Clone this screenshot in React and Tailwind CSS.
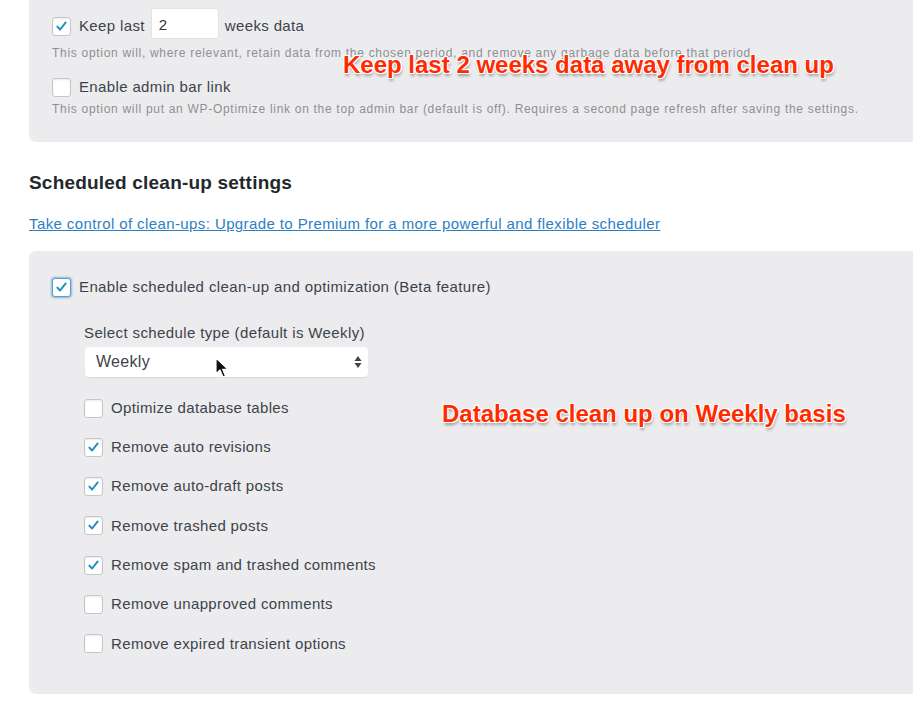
import React from "react";

const font = { fontFamily: '"Liberation Sans", Arial, sans-serif' };

function Box({ checked, focus }) {
  return (
    <span
      className={
        "relative flex h-[19px] w-[19px] shrink-0 items-center justify-center rounded-[3px] bg-white " +
        (focus
          ? "border border-[#5b9dd9] shadow-[0_0_2px_1px_rgba(30,140,190,0.5)]"
          : "border border-[#c3c6ca] shadow-[inset_0_1px_2px_rgba(0,0,0,0.08)]")
      }
    >
      {checked && (
        <svg width="15" height="15" viewBox="0 0 20 20">
          <path
            d="M4.5 10.2 L8.2 14 L15.6 4.6"
            fill="none"
            stroke="#1e8cbe"
            strokeWidth="2.6"
            strokeLinecap="round"
            strokeLinejoin="round"
          />
        </svg>
      )}
    </span>
  );
}

function Row({ checked, label }) {
  return (
    <div className="flex h-[22px] items-center gap-[8px]">
      <Box checked={checked} />
      <span className="text-[15px] text-[#3c434a] tracking-[0.36px]">{label}</span>
    </div>
  );
}

const annoStyle = {
  textShadow:
    "1px 0 0 #fff, -1px 0 0 #fff, 0 1px 0 #fff, 0 -1px 0 #fff, 1px 1px 0 #fff, -1px -1px 0 #fff, 1px -1px 0 #fff, -1px 1px 0 #fff, 1px 3px 3px rgba(0,0,0,0.35)",
};

export default function App() {
  const items = [
    [false, "Optimize database tables"],
    [true, "Remove auto revisions"],
    [true, "Remove auto-draft posts"],
    [true, "Remove trashed posts"],
    [true, "Remove spam and trashed comments"],
    [false, "Remove unapproved comments"],
    [false, "Remove expired transient options"],
  ];
  return (
    <div className="relative h-[708px] w-[913px] overflow-hidden bg-white" style={font}>
      {/* Top panel */}
      <div className="ml-[29px] rounded-bl-[7px] bg-[#ececee] pb-[25px] pl-[23px] pt-[8px]">
        <div className="flex h-[31px] items-center">
          <span className="mt-[6px]"><Box checked /></span>
          <span className="ml-[8px] mt-[5px] text-[15px] text-[#3c434a] tracking-[0.36px]">Keep last</span>
          <div className="ml-[6px] flex h-[31px] w-[68px] items-center rounded-[3px] border border-[#e2e2e4] bg-white pl-[7px] pt-[3px] text-[15px] text-[#333]">
            2
          </div>
          <span className="ml-[6px] mt-[5px] text-[15px] text-[#3c434a] tracking-[0.36px]">weeks data</span>
        </div>
        <p className="mt-[6px] text-[12px] leading-[16px] text-[#8e9095] tracking-[0.7px]">
          This option will, where relevant, retain data from the chosen period, and remove any garbage data before that period.
        </p>
        <div className="mt-[15px]">
          <Row checked={false} label="Enable admin bar link" />
        </div>
        <p className="mt-[3px] text-[12px] leading-[16px] text-[#8e9095] tracking-[0.7px]">
          This option will put an WP-Optimize link on the top admin bar (default is off). Requires a second page refresh after saving the settings.
        </p>
      </div>

      {/* Heading */}
      <h2 className="ml-[29px] mt-[29px] text-[19px] font-semibold leading-[24px] text-[#23282d] tracking-[0.2px]">
        Scheduled clean-up settings
      </h2>
      <a className="ml-[29px] mt-[19px] block text-[15px] leading-[20px] text-[#2b80c5] underline tracking-[0.4px]">
        Take control of clean-ups: Upgrade to Premium for a more powerful and flexible scheduler
      </a>

      {/* Bottom panel */}
      <div className="ml-[29px] mt-[17px] rounded-l-[7px] bg-[#ececee] pb-[39px] pl-[23px] pt-[25px]">
        <div className="flex h-[22px] items-center gap-[8px]">
          <Box checked focus />
          <span className="text-[15px] text-[#3c434a] tracking-[0.38px]">
            Enable scheduled clean-up and optimization (Beta feature)
          </span>
        </div>
        <div className="ml-[32px]">
          <div className="mt-[26px] text-[15px] leading-[18px] text-[#3c434a] tracking-[0.38px]">
            Select schedule type (default is Weekly)
          </div>
          <div className="ml-[1px] mt-[5px] flex h-[30px] w-[283px] items-center justify-between rounded-[4px] bg-white pl-[11px] pr-[6px] text-[16px] text-[#3c434a] tracking-[0.3px] shadow-[0_1px_1px_rgba(0,0,0,0.08)]">
            <span>Weekly</span>
            <svg width="8" height="14" viewBox="0 0 8 14">
              <path d="M4 1 L7.5 6 L0.5 6 Z" fill="#444" />
              <path d="M4 13 L7.5 8 L0.5 8 Z" fill="#444" />
            </svg>
          </div>
          <div className="mt-[20px] flex flex-col gap-[17.33px]">
            {items.map(([c, l]) => (
              <Row key={l} checked={c} label={l} />
            ))}
          </div>
        </div>
      </div>

      {/* Annotations */}
      <div
        className="absolute left-[343px] top-[50px] text-[24px] font-bold leading-[30px] text-[#ff2a00]"
        style={annoStyle}
      >
        Keep last 2 weeks data away from clean up
      </div>
      <div
        className="absolute left-[442px] top-[399px] text-[24px] font-bold leading-[30px] text-[#ff2a00]"
        style={annoStyle}
      >
        Database clean up on Weekly basis
      </div>

      {/* Cursor */}
      <svg className="absolute left-[215px] top-[357px]" width="14" height="22" viewBox="0 0 14 22">
        <path
          d="M1 1 L1 17 L5 13 L8 20 L10.5 19 L7.6 12.3 L13 12.3 Z"
          fill="#111"
          stroke="#fff"
          strokeWidth="1.2"
          strokeLinejoin="round"
        />
      </svg>
    </div>
  );
}
